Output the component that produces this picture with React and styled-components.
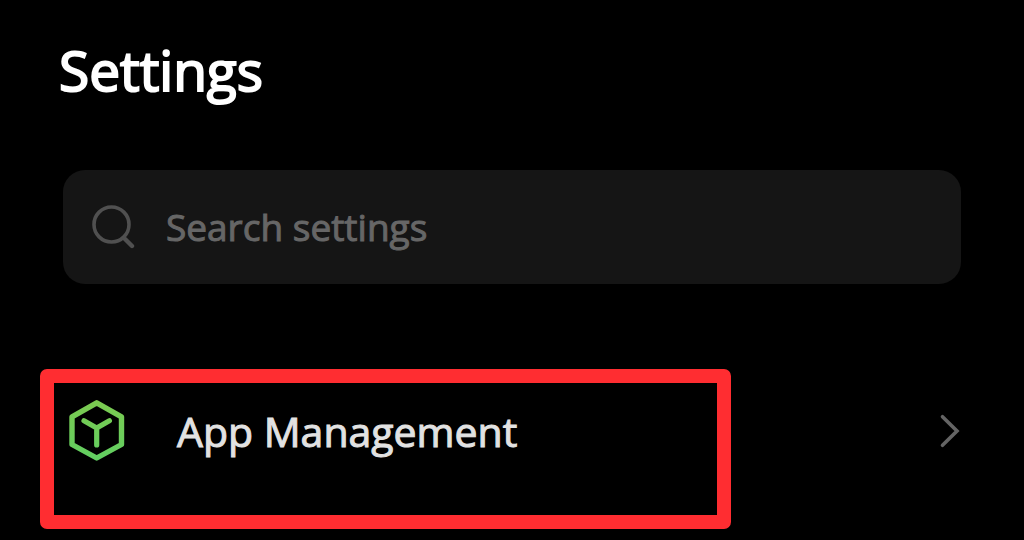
import React from "react";
import styled, { createGlobalStyle } from "styled-components";

const GlobalStyle = createGlobalStyle`
  *, *::before, *::after { box-sizing: border-box; }
  body {
    margin: 0;
    background: #000;
    color: #e2e2e2;
    font-family: "Open Sans", "Noto Sans", sans-serif;
  }
`;

const Page = styled.main`
  min-height: 100vh;
  padding: 30px 63px 0;
`;

const Title = styled.h1`
  margin: 0 0 60px -4px;
  color: #fff;
  font-size: 55px;
  font-weight: 400;
  line-height: 80px;
  -webkit-text-stroke: 2px currentColor;
`;

const SearchBar = styled.label`
  display: flex;
  align-items: center;
  gap: 31px;
  height: 114px;
  padding: 0 28px;
  border-radius: 22px;
  background: #151515;
`;

const SearchInput = styled.input`
  flex: 1;
  min-width: 0;
  height: 60px;
  padding: 0;
  border: 0;
  outline: 0;
  background: transparent;
  color: #e2e2e2;
  font: 400 37px/60px "Open Sans", "Noto Sans", sans-serif;

  &::placeholder {
    color: #666;
    opacity: 1;
    -webkit-text-stroke: 1px currentColor;
  }
`;

const List = styled.nav`
  margin-top: 85px;
`;

const Item = styled.div`
  position: relative;
  padding: 27px 0 63px;
`;

const Row = styled.button`
  display: flex;
  align-items: center;
  width: 100%;
  padding: 0;
  border: 0;
  background: transparent;
  color: inherit;
  font: 400 41px/70px "Open Sans", "Noto Sans", sans-serif;
  text-align: left;
  cursor: pointer;
`;

const RowIcon = styled.span`
  display: flex;
  width: 114px;
  padding-left: 6px;
`;

const RowLabel = styled.span`
  flex: 1;
  -webkit-text-stroke: 1px currentColor;
`;

const Highlight = styled.div`
  position: absolute;
  top: 0;
  bottom: 0;
  left: -23px;
  width: 77%;
  border: 14px solid #ff2d31;
  border-radius: 7px;
  pointer-events: none;
`;

function SearchIcon() {
  return (
    <svg width="44" height="46" viewBox="0 0 44 46" fill="none" stroke="#505050" strokeWidth="3.6" strokeLinecap="round" aria-hidden="true">
      <circle cx="20.5" cy="20.5" r="17.5" />
      <path d="M34 35l7 7" strokeWidth="4.4" />
    </svg>
  );
}

function AppIcon() {
  return (
    <svg width="56" height="62" viewBox="0 0 56 62" fill="none" stroke="url(#leaf)" strokeWidth="5.4" strokeLinecap="round" strokeLinejoin="round" aria-hidden="true">
      <defs>
        <linearGradient id="leaf" gradientUnits="userSpaceOnUse" x1="0" y1="0" x2="0" y2="62">
          <stop offset="0" stopColor="#7cca50" />
          <stop offset="1" stopColor="#60cf62" />
        </linearGradient>
      </defs>
      <path d="M27.7 2.8L52.5 16.8V44.5L27.7 58L3 44.5V16.8Z" />
      <path d="M15 20.8L27.7 28L40.4 20.8M27.7 28V45" strokeWidth="5.2" />
    </svg>
  );
}

function Chevron() {
  return (
    <svg width="22" height="34" viewBox="0 0 22 34" fill="none" stroke="#646464" strokeWidth="3.6" strokeLinecap="round" aria-hidden="true">
      <path d="M3.5 2.7L18 17L3.5 31.3" />
    </svg>
  );
}

export default function App() {
  return (
    <>
      <GlobalStyle />
      <Page>
        <Title>Settings</Title>
        <SearchBar>
          <SearchIcon />
          <SearchInput type="text" aria-label="Search settings" placeholder="Search settings" />
        </SearchBar>
        <List>
          <Item>
            <Row type="button">
              <RowIcon>
                <AppIcon />
              </RowIcon>
              <RowLabel>App Management</RowLabel>
              <Chevron />
            </Row>
            <Highlight />
          </Item>
        </List>
      </Page>
    </>
  );
}
